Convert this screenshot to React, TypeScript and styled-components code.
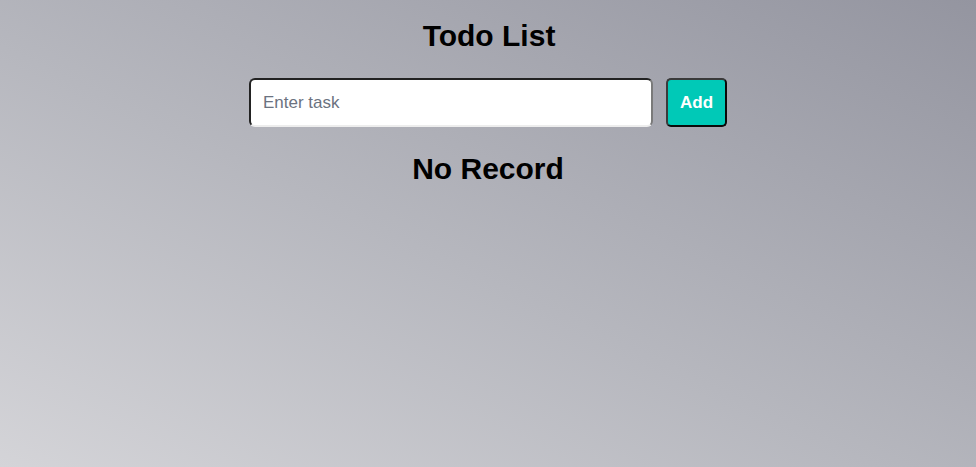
import React, { useState } from "react";
import styled, { createGlobalStyle } from "styled-components";

const GlobalStyle = createGlobalStyle`
  html, body { margin: 0; padding: 0; }
  body {
    font-family: "Liberation Sans", Arial, sans-serif;
    min-height: 100vh;
    background: linear-gradient(to top right, #d4d4d8 0%, #b6b7be 45%, #9495a0 100%);
    background-attachment: fixed;
  }
`;

const Page = styled.div`
  min-height: 100vh;
  display: flex;
  flex-direction: column;
  align-items: center;
  padding-top: 19px;
  box-sizing: border-box;
`;

const Title = styled.h1`
  margin: 0 0 25px;
  font-size: 30px;
  line-height: 34px;
  font-weight: 700;
  color: #000;
  transform: translateX(1px);
`;

const Form = styled.form`
  display: flex;
  gap: 13px;
  align-items: stretch;
  margin: 0 0 25px;
`;

const TaskInput = styled.input`
  width: 404px;
  height: 49px;
  box-sizing: border-box;
  padding: 0 12px;
  font-family: "Liberation Sans", Arial, sans-serif;
  font-size: 17px;
  color: #111;
  background: #fff;
  border-width: 2px;
  border-style: solid;
  border-color: #222 #7a7a7a #ededed #222;
  border-radius: 6px;
  outline: none;
  &::placeholder { color: #6b7280; }
`;

const AddButton = styled.button`
  width: 61px;
  height: 49px;
  box-sizing: border-box;
  background: #00c9b7;
  color: #fff;
  font-family: "Liberation Sans", Arial, sans-serif;
  font-size: 17px;
  font-weight: 700;
  border-width: 2px;
  border-style: solid;
  border-color: #3a3a3a #0a0a0a #0a0a0a #3a3a3a;
  border-radius: 5px;
  cursor: pointer;
  padding: 0;
`;

const Empty = styled.h2`
  margin: 0;
  font-size: 30px;
  line-height: 34px;
  font-weight: 700;
  color: #000;
`;

export default function App() {
  const [task, setTask] = useState("");
  return (
    <>
      <GlobalStyle />
      <Page>
        <Title>Todo List</Title>
        <Form onSubmit={(e) => e.preventDefault()}>
          <TaskInput
            placeholder="Enter task"
            value={task}
            onChange={(e) => setTask(e.target.value)}
          />
          <AddButton type="submit">Add</AddButton>
        </Form>
        <Empty>No Record</Empty>
      </Page>
    </>
  );
}
